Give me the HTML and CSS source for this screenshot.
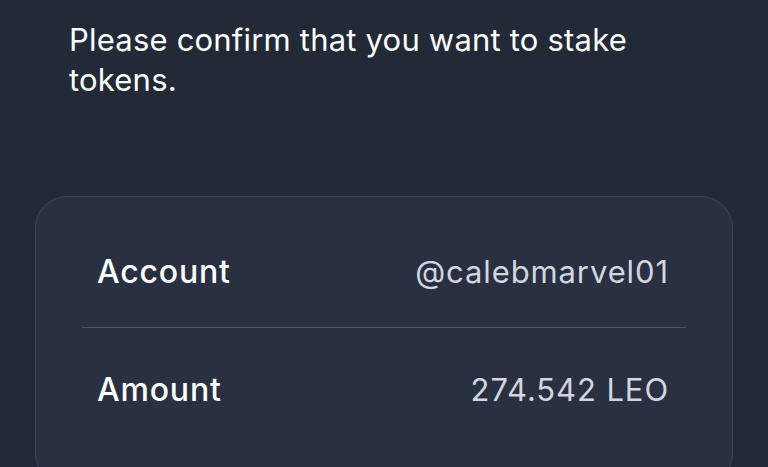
FILE: index.html
```html
<!DOCTYPE html>
<html>
<head>
    <meta charset="utf-8">
    <meta name="viewport" content="width=device-width, initial-scale=1.0">
    <title>Confirm stake</title>
    <link rel="stylesheet" href="styles.css">
</head>
<body>
    <div class="page">
        <p class="message">Please confirm that you want to stake tokens.</p>

        <div class="card">
            <div class="row">
                <span class="label">Account</span>
                <span class="value">@calebmarvel01</span>
            </div>
            <div class="divider"></div>
            <div class="row">
                <span class="label">Amount</span>
                <span class="value">274.542 LEO</span>
            </div>
        </div>
    </div>
</body>
</html>
```

FILE: styles.css
```css
body, html {
    height: 100%;
    margin: 0;
    font-family: Inter, "Noto Sans", sans-serif;
    background-color: #222937;
    overflow: hidden;
}

.page {
    padding: 0 35px;
}

.message {
    margin: 20px 0 0 34px;
    max-width: 590px;
    color: #ffffff;
    font-size: 31px;
    line-height: 40px;
    letter-spacing: 0.2px;
}

.card {
    margin-top: 96px;
    padding: 18px 46px 40px;
    background-color: #283042;
    border: 1px solid #3a4661;
    border-radius: 32px;
}

.row {
    display: flex;
    justify-content: space-between;
    align-items: center;
    height: 112px;
    padding: 0 17px 0 15px;
}

.divider + .row {
    padding-top: 5px;
}

.label {
    color: #ffffff;
    font-size: 32px;
    font-weight: 500;
    letter-spacing: 0.8px;
}

.value {
    color: #d3d6de;
    font-size: 31px;
    letter-spacing: 0.9px;
}

.divider {
    height: 1px;
    background-color: #4a556e;
}
```
